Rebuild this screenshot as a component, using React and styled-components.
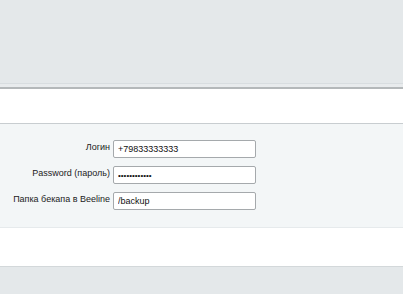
import styled, { createGlobalStyle } from "styled-components";

const Global = createGlobalStyle`
  body {
    margin: 0;
    background: #fff;
    font-family: "Liberation Sans", Arial, sans-serif;
  }
`;

const Page = styled.div`
  width: 403px;
  height: 294px;
  display: flex;
  flex-direction: column;
  overflow: hidden;
`;

const Header = styled.div`
  height: 83px;
  background: #e4e8ea;
`;

const HeaderEdge = styled.div`
  height: 3px;
  background: #e8ebed;
  border-top: 1px solid #d8dde0;
  border-bottom: 2px solid #b4b8ba;
`;

const Gap = styled.div`
  height: ${(p) => p.h}px;
  background: #fff;
`;

const Panel = styled.div`
  background: #f3f6f7;
  border-top: 1px solid #c8cdd0;
  border-bottom: 1px solid #e6eaec;
  padding: 16px 0 0;
  height: 87px;
`;

const Form = styled.div`
  display: grid;
  grid-template-columns: 110px 143px;
  column-gap: 3px;
  row-gap: 8px;
`;

const Label = styled.label`
  text-align: right;
  font-size: 9px;
  color: #222;
  padding-top: 2px;
  white-space: nowrap;
`;

const Input = styled.input`
  box-sizing: border-box;
  width: 143px;
  height: 18px;
  margin: 0;
  padding: 0 4px;
  border: 1px solid #a5a9ac;
  border-radius: 2px;
  background: #fff;
  font-family: "Liberation Sans", Arial, sans-serif;
  font-size: ${(p) => (p.$small ? 8 : 9)}px;
  color: #111;
  outline: none;
`;

const Footer = styled.div`
  flex: 1;
  background: #e4e8ea;
  border-top: 1px solid #d3d8da;
`;

export default function App() {
  return (
    <Page>
      <Global />
      <Header />
      <HeaderEdge />
      <Gap h={34} />
      <Panel>
        <Form>
          <Label>Логин</Label>
          <Input defaultValue="+79833333333" />
          <Label>Password (пароль)</Label>
          <Input $small type="password" defaultValue="passwordpass" />
          <Label>Папка бекапа в Beeline</Label>
          <Input defaultValue="/backup" />
        </Form>
      </Panel>
      <Gap h={38} />
      <Footer />
    </Page>
  );
}
